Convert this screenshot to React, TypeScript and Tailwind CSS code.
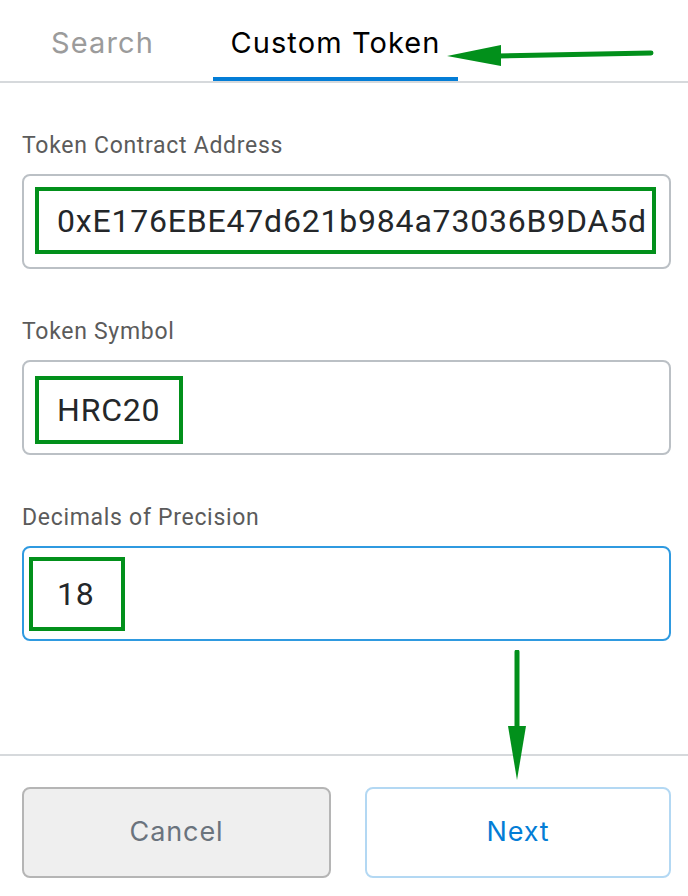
import React from "react";

const labelCls = "text-[23px] leading-[22px] tracking-[0.7px] text-[#5b5b5b]";
const valueCls = "text-[32px] leading-none tracking-[0.8px] text-[#24272a] whitespace-nowrap";

function DownArrow() {
  return (
    <svg className="absolute left-[505px] top-[650px]" width="24" height="132" viewBox="0 0 24 132">
      <line x1="12" y1="2" x2="12" y2="80" stroke="#02901b" strokeWidth="5" strokeLinecap="round" />
      <polygon points="3,76 21,76 12,130" fill="#02901b" />
    </svg>
  );
}

function LeftArrow() {
  return (
    <svg className="absolute left-[445px] top-[40px]" width="212" height="30" viewBox="0 0 212 30">
      <line x1="52" y1="16" x2="206" y2="13" stroke="#02901b" strokeWidth="5" strokeLinecap="round" />
      <polygon points="56,5 56,26 2,16" fill="#02901b" />
    </svg>
  );
}

export default function App() {
  return (
    <div className="relative w-[688px] h-[896px] bg-white overflow-hidden font-['Roboto',sans-serif]">
      <div className="flex h-[83px] border-b-2 border-[#d6d9dc]">
        <div className="flex w-[213px] items-center justify-center pr-[8px] pt-[4px] font-['Inter',sans-serif] text-[29px] tracking-[1.1px] text-[#9b9b9b]">
          Search
        </div>
        <div className="flex w-[245px] items-center justify-center border-b-4 border-[#037dd6] pt-[8px] font-['Inter',sans-serif] text-[29px] tracking-[1.1px] text-black">
          Custom Token
        </div>
      </div>

      <div className="pl-[22px] pr-[17px] pt-[52px]">
        <div className={labelCls}>Token Contract Address</div>
        <div className="mt-[17px] flex h-[95px] items-start rounded-lg border-2 border-[#bbc0c5] pl-[11px] pt-[11px]">
          <div className="flex h-[67px] w-[621px] items-center border-4 border-[#02901b] pl-[18px] pr-[7px]">
            <div className={`${valueCls} overflow-hidden`}>0xE176EBE47d621b984a73036B9DA5d8a1c7e8F5a</div>
          </div>
        </div>

        <div className={`${labelCls} mt-[52px]`}>Token Symbol</div>
        <div className="mt-[17px] flex h-[95px] items-start rounded-lg border-2 border-[#bbc0c5] pl-[11px] pt-[14px]">
          <div className="flex h-[68px] w-[148px] items-center border-4 border-[#02901b] pl-[18px]">
            <div className={valueCls}>HRC20</div>
          </div>
        </div>

        <div className={`${labelCls} mt-[52px]`}>Decimals of Precision</div>
        <div className="mt-[17px] flex h-[95px] items-start rounded-lg border-2 border-[#2f9ae0] pl-[5px] pt-[9px]">
          <div className="flex h-[74px] w-[96px] items-center border-4 border-[#02901b] pl-[24px]">
            <div className={valueCls}>18</div>
          </div>
        </div>
      </div>

      <div className="mt-[113px] border-t-2 border-[#d6d9dc] pl-[22px] pr-[17px] pt-[31px]">
        <div className="flex gap-[34px]">
          <button className="flex h-[91px] w-[309px] items-center justify-center rounded-lg border-2 border-[#b5b5b5] bg-[#efefef] font-['Inter',sans-serif] text-[27px] tracking-[0.9px] text-[#6a737d]">
            Cancel
          </button>
          <button className="flex h-[91px] w-[306px] items-center justify-center rounded-lg border-2 border-[#b3d8f3] bg-white font-['Inter',sans-serif] text-[27px] tracking-[0.9px] text-[#037dd6]">
            Next
          </button>
        </div>
      </div>

      <LeftArrow />
      <DownArrow />
    </div>
  );
}
